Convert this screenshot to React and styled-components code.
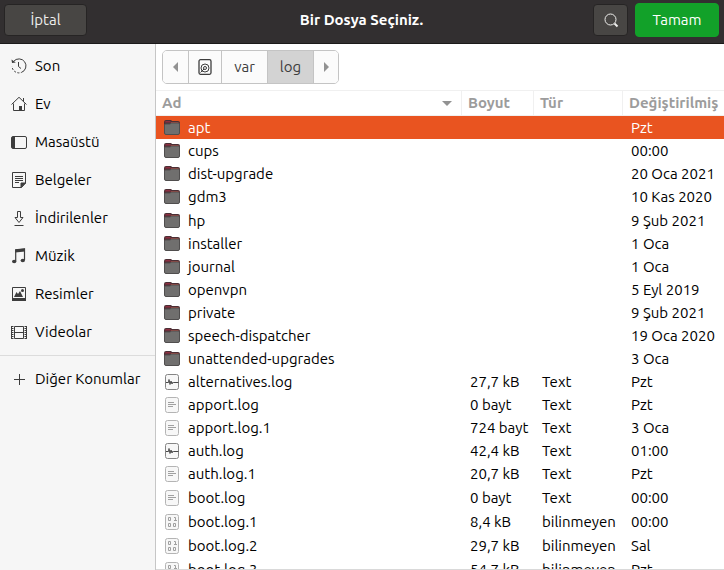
import React from 'react';
import styled, { createGlobalStyle } from 'styled-components';

const GlobalStyle = createGlobalStyle`
  *, *::before, *::after { box-sizing: border-box; }
  body {
    margin: 0;
    overflow: hidden;
    background: #fff;
    color: #000;
    font: 15px/20px Ubuntu, "Noto Sans", sans-serif;
  }
  button { font: inherit; cursor: default; }
  svg { display: block; flex: none; }
`;

const Dialog = styled.div`
  display: flex;
  flex-direction: column;
  height: 100vh;
`;

const HeaderBar = styled.header`
  display: grid;
  grid-template-columns: 1fr auto 1fr;
  align-items: center;
  flex: none;
  height: 44px;
  padding: 0 5px 4px 4px;
  background: #322f30;
  border-bottom: 1px solid #1b1a1a;
`;

const Title = styled.h1`
  margin: 0;
  font-size: 15px;
  line-height: 20px;
  font-weight: 700;
  color: #fff;
`;

const Actions = styled.div`
  display: flex;
  align-items: center;
  justify-content: flex-end;
  gap: 7px;
`;

const HeaderButton = styled.button`
  display: flex;
  align-items: center;
  justify-content: center;
  justify-self: start;
  width: ${(p) => p.$width}px;
  height: ${(p) => (p.$primary ? 34 : 32)}px;
  padding: 0;
  border: 1px solid ${(p) => (p.$primary ? '#12a129' : '#262424')};
  border-radius: 4px;
  background: ${(p) => (p.$primary ? '#12a129' : '#484644')};
  color: ${(p) => (p.$primary ? '#fff' : '#eeeeec')};
`;

const Body = styled.div`
  display: flex;
  flex: 1;
  min-height: 0;
`;

const Sidebar = styled.nav`
  flex: none;
  width: 156px;
  padding-top: 3px;
  background: #f6f6f6;
  border-right: 1px solid #c6c6c6;
`;

const Places = styled.ul`
  margin: 0;
  padding: 0;
  list-style: none;

  & + & {
    margin-top: 4px;
    padding-top: 4px;
    border-top: 1px solid #dcdcdc;
  }
`;

const Place = styled.a`
  display: flex;
  align-items: center;
  gap: 8px;
  height: 38px;
  padding-left: 11px;
  color: #000;
  text-decoration: none;
  white-space: nowrap;
`;

const Main = styled.main`
  display: flex;
  flex-direction: column;
  flex: 1;
  min-width: 0;
  border-bottom: 1px solid #d9d9d9;
`;

const PathBar = styled.div`
  display: flex;
  flex: none;
  padding: 6px;
`;

const PathGroup = styled.div`
  display: flex;
  height: 34px;
  border: 1px solid #c4c4c4;
  border-radius: 5px;
  overflow: hidden;
`;

const PathButton = styled.button`
  display: flex;
  align-items: center;
  justify-content: center;
  width: ${(p) => p.$width}px;
  padding: 0;
  border: 0;
  background: ${(p) => (p.$active ? '#d3d3d3' : '#fbfbfb')};
  color: #3d3d3d;

  & + & { border-left: 1px solid #c4c4c4; }
`;

const ListView = styled.div`
  flex: 1;
  min-height: 0;
  overflow: hidden;
`;

const FileTable = styled.table`
  width: 100%;
  border-collapse: separate;
  border-spacing: 0;
  table-layout: fixed;
`;

const Column = styled.col`
  width: ${(p) => (p.$width ? `${p.$width}px` : 'auto')};
`;

const Heading = styled.th`
  height: 26px;
  padding: 0 0 0 6px;
  border-top: 1px solid #f0f0f0;
  border-bottom: 1px solid #f0f0f0;
  color: #9c9c9c;
  line-height: 20px;
  font-weight: 700;
  text-align: left;
  white-space: nowrap;

  & + & { border-left: 1px solid #f0f0f0; }
`;

const SortLabel = styled.div`
  display: flex;
  align-items: center;
  justify-content: space-between;
  padding-right: 9px;
`;

const Row = styled.tr`
  height: ${(p) => (p.$tall ? 24 : 23)}px;
  background: ${(p) => (p.$selected ? '#e95420' : 'transparent')};
  color: ${(p) => (p.$selected ? '#fff' : '#000')};
`;

const Cell = styled.td`
  padding: 0 0 0 9px;
  line-height: 20px;
  white-space: nowrap;

  &:first-child { padding-left: 8px; }
`;

const FileName = styled.div`
  display: flex;
  align-items: center;
  gap: 8px;
  line-height: 20px;
`;

const Icon = ({ children }) => (
  <svg width="16" height="16" viewBox="0 0 16 16" fill="none" stroke="#3d3d3d" aria-hidden="true">
    {children}
  </svg>
);

const placeIcons = {
  recent: (
    <>
      <path d="M2.6 3.4A7 7 0 1 1 1 8.500" strokeDasharray="26 1.500 2 1.500 2 1.500 2 1.500" />
      <path d="M7.500 4v4.500l2.500 2" />
      <path d="M.500 1.500 1 5l3.800-.600z" fill="#3d3d3d" stroke="none" />
    </>
  ),
  home: (
    <>
      <path d="M.5 8.500 8 1.300l7.500 7.200M12.500 2v3.500M2.500 7.500v7h11v-7" />
      <path d="M8 10h3v5H8z" fill="#3d3d3d" stroke="none" />
    </>
  ),
  desktop: (
    <>
      <rect x=".5" y="2.500" width="15" height="12" rx="1.500" />
      <path d="M1 3h3v11H1z" fill="#3d3d3d" stroke="none" />
    </>
  ),
  documents: (
    <>
      <path d="M1.500.500h13v10.500l-4 4.500h-9z" />
      <path d="M4 4.500h8M4 6.500h8M4 8.500h8M4 10.500h4" />
      <path d="M10 15.500V11h4.500z" fill="#3d3d3d" />
    </>
  ),
  downloads: (
    <path d="M6.500 1.500h3v6h2.500L8 12.500 4 7.500h2.500zM3.500 15.500h9" />
  ),
  music: (
    <>
      <path d="M4.700 13V1.800L13.500 1v11" strokeWidth="1.200" />
      <path d="M4.200 1.500 14 .500v3l-9.800 1z" fill="#3d3d3d" stroke="none" />
      <ellipse cx="3.200" cy="13.500" rx="2.200" ry="1.800" fill="#3d3d3d" stroke="none" />
      <ellipse cx="11.800" cy="12.500" rx="2.200" ry="1.800" fill="#3d3d3d" stroke="none" />
    </>
  ),
  pictures: (
    <>
      <path d="M1.500 1.500h13v12h-13z" />
      <path d="M1 12h14v3H1zM3 11l2.500-5L7 8l2-3 3 6z" fill="#3d3d3d" stroke="none" />
      <circle cx="11.500" cy="4.500" r="1.500" fill="#3d3d3d" stroke="none" />
    </>
  ),
  videos: (
    <>
      <path d="M1.500 2v13M14.500 2v13" strokeWidth="2" strokeDasharray="1 1" />
      <path d="M3.500 2.500h9v12h-9zM3.500 8.500h9M.500 2v13M15.500 2v13" />
    </>
  ),
  other: <path d="M8.500 3v11M3 8.500h11" />,
};

const FolderIcon = () => (
  <Icon>
    <path d="M0 5V2Q0 0 2 0h4.500q1 0 1.500 1h6q2 0 2 2v4H0z" fill="#4c2f35" stroke="none" />
    <path d="M1 2.500Q1 1 2 1h4l1.500 1.500H1z" fill="#8c2f40" stroke="none" />
    <path d="M7 2.500h7.500" stroke="#b5483f" />
    <path d="M.500 5q0-1 1-1h4.500l1.500-1h7q1 0 1 1v9q0 1.500-1.500 1.500H2q-1.500 0-1.500-1.500z" fill="#706f6e" stroke="#504e4e" />
  </Icon>
);

const Sheet = ({ color = '#b4b4b4', children }) => (
  <Icon>
    <rect x="1.500" y=".500" width="13" height="15" rx="2" fill="#f7f7f7" stroke={color} />
    {children}
  </Icon>
);

const fileIcons = {
  folder: <FolderIcon />,
  log: (
    <Sheet color="#858585">
      <path d="M2 8.500h2.500l.5-3 1 5 1-3.500 1 3 1-2 .500.500h5" stroke="#4a4a4a" />
    </Sheet>
  ),
  text: (
    <Sheet>
      <path d="M4 5.500h6M4 7.500h8M4 9.500h5" stroke="#a0a0a0" />
    </Sheet>
  ),
  binary: (
    <Sheet>
      <path d="M4.500 3.500h2v3h-2zM10 3.500h1.500v3M10 6.500h3M4.500 9.500h2v3h-2zM9.500 9.500h2v3h-2z" stroke="#a0a0a0" />
    </Sheet>
  ),
};

const Triangle = ({ d, label }) => (
  <svg width="10" height="10" viewBox="0 0 10 10" fill="#929292" role="img" aria-label={label}>
    <path d={d} />
  </svg>
);

const places = [
  ['recent', 'Son'],
  ['home', 'Ev'],
  ['desktop', 'Masaüstü'],
  ['documents', 'Belgeler'],
  ['downloads', 'İndirilenler'],
  ['music', 'Müzik'],
  ['pictures', 'Resimler'],
  ['videos', 'Videolar'],
];

const otherPlaces = [['other', 'Diğer Konumlar']];

const files = [
  { kind: 'folder', name: 'apt', modified: 'Pzt', selected: true },
  { kind: 'folder', name: 'cups', modified: '00:00' },
  { kind: 'folder', name: 'dist-upgrade', modified: '20 Oca 2021' },
  { kind: 'folder', name: 'gdm3', modified: '10 Kas 2020', tall: true },
  { kind: 'folder', name: 'hp', modified: '9 Şub 2021' },
  { kind: 'folder', name: 'installer', modified: '1 Oca' },
  { kind: 'folder', name: 'journal', modified: '1 Oca' },
  { kind: 'folder', name: 'openvpn', modified: '5 Eyl 2019' },
  { kind: 'folder', name: 'private', modified: '9 Şub 2021' },
  { kind: 'folder', name: 'speech-dispatcher', modified: '19 Oca 2020' },
  { kind: 'folder', name: 'unattended-upgrades', modified: '3 Oca' },
  { kind: 'log', name: 'alternatives.log', size: '27,7 kB', type: 'Text', modified: 'Pzt' },
  { kind: 'text', name: 'apport.log', size: '0 bayt', type: 'Text', modified: 'Pzt' },
  { kind: 'text', name: 'apport.log.1', size: '724 bayt', type: 'Text', modified: '3 Oca' },
  { kind: 'log', name: 'auth.log', size: '42,4 kB', type: 'Text', modified: '01:00' },
  { kind: 'text', name: 'auth.log.1', size: '20,7 kB', type: 'Text', modified: 'Pzt', tall: true },
  { kind: 'text', name: 'boot.log', size: '0 bayt', type: 'Text', modified: '00:00', tall: true },
  { kind: 'binary', name: 'boot.log.1', size: '8,4 kB', type: 'bilinmeyen', modified: '00:00', tall: true },
  { kind: 'binary', name: 'boot.log.2', size: '29,7 kB', type: 'bilinmeyen', modified: 'Sal', tall: true },
  { kind: 'binary', name: 'boot.log.3', size: '54,7 kB', type: 'bilinmeyen', modified: 'Pzt' },
];

const PlaceList = ({ items }) => (
  <Places>
    {items.map(([icon, label]) => (
      <li key={label}>
        <Place href={`#${icon}`}>
          <Icon>{placeIcons[icon]}</Icon>
          {label}
        </Place>
      </li>
    ))}
  </Places>
);

export default function App() {
  return (
    <Dialog>
      <GlobalStyle />
      <HeaderBar>
        <HeaderButton type="button" $width={83}>İptal</HeaderButton>
        <Title>Bir Dosya Seçiniz.</Title>
        <Actions>
          <HeaderButton type="button" $width={35} aria-label="Ara">
            <svg width="16" height="16" viewBox="0 0 16 16" fill="none" stroke="#eeeeec" aria-hidden="true">
              <circle cx="7.500" cy="7.500" r="5.500" />
              <path d="m11.500 11.500 3 3" strokeWidth="2" />
            </svg>
          </HeaderButton>
          <HeaderButton type="button" $width={84} $primary>Tamam</HeaderButton>
        </Actions>
      </HeaderBar>
      <Body>
        <Sidebar>
          <PlaceList items={places} />
          <PlaceList items={otherPlaces} />
        </Sidebar>
        <Main>
          <PathBar>
            <PathGroup>
              <PathButton type="button" $width={25}><Triangle label="Geri" d="M7 0v10L2 5z" /></PathButton>
              <PathButton type="button" $width={33} aria-label="Dosya sistemi">
                <Icon>
                  <rect x="2" y=".700" width="12" height="14.600" rx="1.500" strokeWidth="1.300" />
                  <circle cx="8" cy="9" r="4" />
                  <circle cx="8" cy="9" r="1.500" />
                  <path d="M3.500 13.500 7 10" />
                </Icon>
              </PathButton>
              <PathButton type="button" $width={46}>var</PathButton>
              <PathButton type="button" $width={46} $active>log</PathButton>
              <PathButton type="button" $width={25}><Triangle label="İleri" d="M3 0v10l5-5z" /></PathButton>
            </PathGroup>
          </PathBar>
          <ListView>
            <FileTable>
              <colgroup>
                <Column />
                <Column $width={72} />
                <Column $width={89} />
                <Column $width={102} />
              </colgroup>
              <thead>
                <tr>
                  <Heading aria-sort="ascending">
                    <SortLabel>
                      Ad
                      <Triangle label="Artan" d="M0 3h10L5 8z" />
                    </SortLabel>
                  </Heading>
                  <Heading>Boyut</Heading>
                  <Heading>Tür</Heading>
                  <Heading>Değiştirilmiş</Heading>
                </tr>
              </thead>
              <tbody>
                {files.map((file) => (
                  <Row key={file.name} $selected={file.selected} $tall={file.tall}>
                    <Cell>
                      <FileName>
                        {fileIcons[file.kind]}
                        {file.name}
                      </FileName>
                    </Cell>
                    <Cell>{file.size}</Cell>
                    <Cell>{file.type}</Cell>
                    <Cell>{file.modified}</Cell>
                  </Row>
                ))}
              </tbody>
            </FileTable>
          </ListView>
        </Main>
      </Body>
    </Dialog>
  );
}
